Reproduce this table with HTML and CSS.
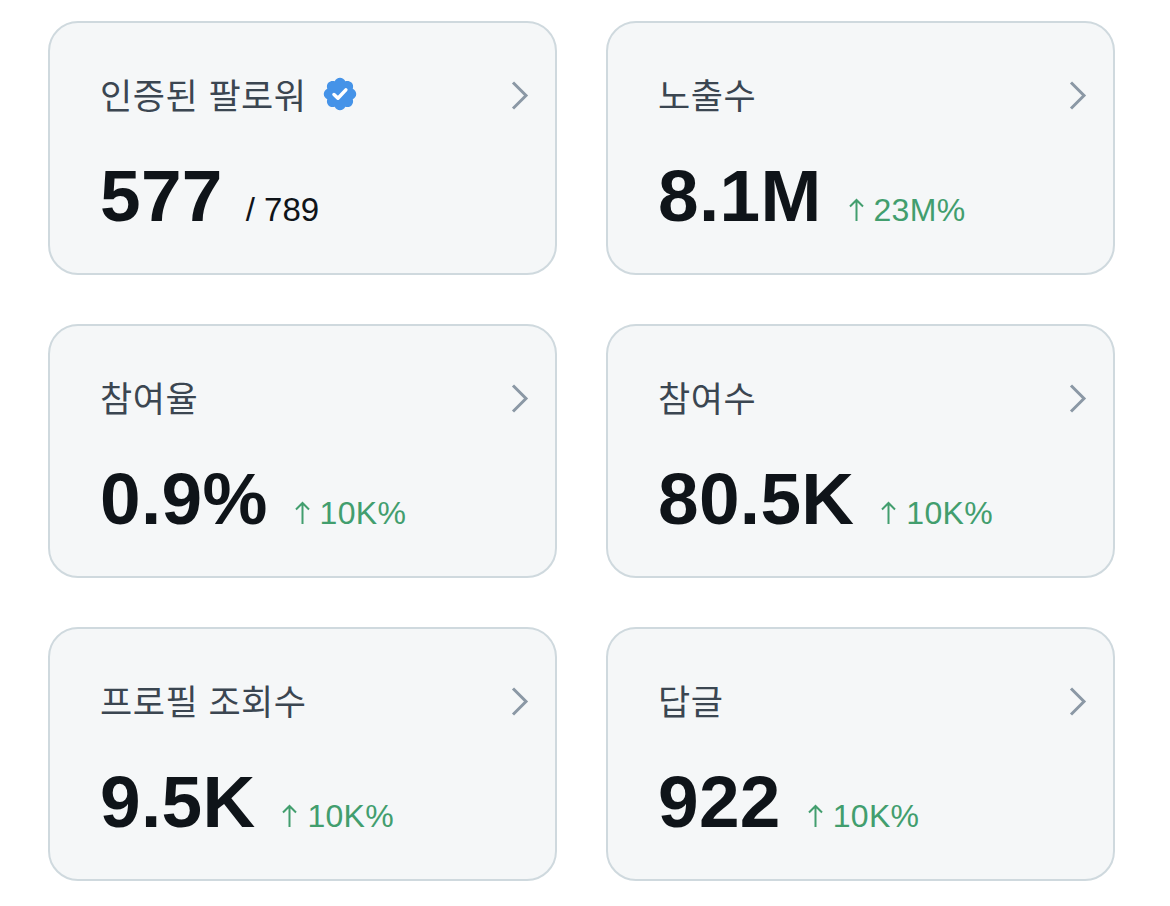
FILE: index.html
```
<!DOCTYPE html>
<html lang="ko">
<head>
<meta charset="utf-8">
<link rel="stylesheet" href="styles.css">
</head>
<body>
<main class="grid">
  <section class="card">
    <div class="head">
      <span class="title">인증된 팔로워
        <svg class="badge" viewBox="0 0 24 24"><path fill="#4593e8" d="M22.25 12c0-1.43-.88-2.67-2.19-3.34.46-1.39.2-2.9-.81-3.91s-2.52-1.27-3.91-.81c-.66-1.31-1.910-2.19-3.34-2.19s-2.67.88-3.33 2.19c-1.4-.46-2.91-.2-3.92.81s-1.26 2.52-.8 3.91c-1.31.67-2.2 1.91-2.2 3.34s.89 2.67 2.2 3.34c-.46 1.39-.21 2.9.8 3.91s2.52 1.26 3.91.81c.67 1.31 1.91 2.19 3.34 2.19s2.68-.88 3.34-2.19c1.39.45 2.9.2 3.91-.81s1.27-2.52.81-3.91c1.31-.67 2.19-1.91 2.19-3.34z"/><path fill="none" stroke="#fff" stroke-width="2.2" stroke-linecap="round" stroke-linejoin="round" d="M8.2 12.3l2.5 2.4 5-5.3"/></svg>
      </span>
      <svg class="chev" viewBox="0 0 18 30"><path d="M2 2l13 13L2 28" fill="none" stroke="#8b98a5" stroke-width="3"/></svg>
    </div>
    <div class="value"><span class="num">577</span><span class="total">/ 789</span></div>
  </section>
  <section class="card">
    <div class="head">
      <span class="title">노출수</span>
      <svg class="chev" viewBox="0 0 18 30"><path d="M2 2l13 13L2 28" fill="none" stroke="#8b98a5" stroke-width="3"/></svg>
    </div>
    <div class="value"><span class="num">8.1M</span><span class="delta"><svg class="arr" viewBox="0 0 15 24"><path d="M7.5 23V2M1 8.5l6.5-6.5 6.5 6.5" fill="none" stroke="#429e6e" stroke-width="2"/></svg>23M%</span></div>
  </section>
  <section class="card">
    <div class="head">
      <span class="title">참여율</span>
      <svg class="chev" viewBox="0 0 18 30"><path d="M2 2l13 13L2 28" fill="none" stroke="#8b98a5" stroke-width="3"/></svg>
    </div>
    <div class="value"><span class="num">0.9%</span><span class="delta"><svg class="arr" viewBox="0 0 15 24"><path d="M7.5 23V2M1 8.5l6.5-6.5 6.5 6.5" fill="none" stroke="#429e6e" stroke-width="2"/></svg>10K%</span></div>
  </section>
  <section class="card">
    <div class="head">
      <span class="title">참여수</span>
      <svg class="chev" viewBox="0 0 18 30"><path d="M2 2l13 13L2 28" fill="none" stroke="#8b98a5" stroke-width="3"/></svg>
    </div>
    <div class="value"><span class="num">80.5K</span><span class="delta"><svg class="arr" viewBox="0 0 15 24"><path d="M7.5 23V2M1 8.5l6.5-6.5 6.5 6.5" fill="none" stroke="#429e6e" stroke-width="2"/></svg>10K%</span></div>
  </section>
  <section class="card">
    <div class="head">
      <span class="title">프로필 조회수</span>
      <svg class="chev" viewBox="0 0 18 30"><path d="M2 2l13 13L2 28" fill="none" stroke="#8b98a5" stroke-width="3"/></svg>
    </div>
    <div class="value"><span class="num">9.5K</span><span class="delta"><svg class="arr" viewBox="0 0 15 24"><path d="M7.5 23V2M1 8.5l6.5-6.5 6.5 6.5" fill="none" stroke="#429e6e" stroke-width="2"/></svg>10K%</span></div>
  </section>
  <section class="card">
    <div class="head">
      <span class="title">답글</span>
      <svg class="chev" viewBox="0 0 18 30"><path d="M2 2l13 13L2 28" fill="none" stroke="#8b98a5" stroke-width="3"/></svg>
    </div>
    <div class="value"><span class="num">922</span><span class="delta"><svg class="arr" viewBox="0 0 15 24"><path d="M7.5 23V2M1 8.5l6.5-6.5 6.5 6.5" fill="none" stroke="#429e6e" stroke-width="2"/></svg>10K%</span></div>
  </section>
</main>
</body>
</html>
```
FILE: styles.css
```
html, body {
  margin: 0;
  padding: 0;
  background: #ffffff;
}
body {
  font-family: "Liberation Sans", Arial, "Noto Sans CJK KR", sans-serif;
  color: #0f1419;
}
.grid {
  display: grid;
  grid-template-columns: 509px 509px;
  grid-auto-rows: 254px;
  column-gap: 49px;
  row-gap: 49px;
  padding: 21px 0 0 48px;
}
.card {
  box-sizing: border-box;
  border: 2px solid #cfd9de;
  border-radius: 30px;
  background: #f5f7f8;
  padding: 51px 26px 0 50px;
  display: flex;
  flex-direction: column;
}
.head {
  display: flex;
  align-items: center;
  justify-content: space-between;
  height: 40px;
}
.title {
  font-family: "Noto Sans CJK KR", sans-serif;
  font-size: 35px;
  line-height: 40px;
  color: #3b4651;
  letter-spacing: 0.5px;
  display: flex;
  align-items: center;
}
.badge {
  width: 38px;
  height: 38px;
  margin-left: 14px;
}
.chev {
  width: 18px;
  height: 31px;
  margin-top: 2px;
}
.value {
  margin-top: 46px;
  display: flex;
  align-items: baseline;
}
.num {
  font-size: 73px;
  line-height: 72px;
  font-weight: 700;
  letter-spacing: 0.3px;
  color: #0f1419;
}
.total {
  font-size: 33px;
  margin-left: 23px;
  color: #0f1419;
}
.delta {
  font-size: 32px;
  margin-left: 27px;
  color: #429e6e;
  letter-spacing: 0.3px;
}
.arr {
  width: 15px;
  height: 24px;
  margin-right: 10px;
  vertical-align: -1px;
}
```
